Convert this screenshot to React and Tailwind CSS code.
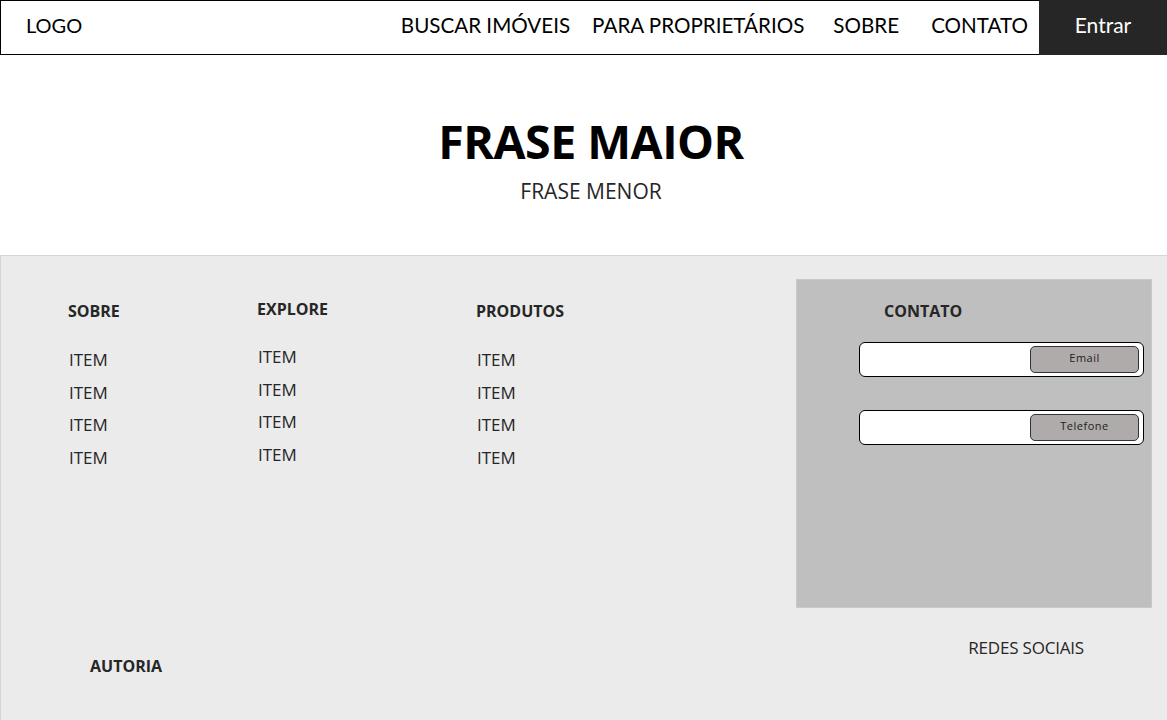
import React from 'react'

const columns = [
  { title: 'SOBRE', x: 'w-[189px]', head: 'mt-[2px]', items: 'mt-[25px]' },
  { title: 'EXPLORE', x: 'w-[219px]', head: 'mt-0', items: 'mt-[24px]' },
  { title: 'PRODUTOS', x: 'w-[200px]', head: 'mt-[2px]', items: 'mt-[25px]' },
]

function ContactField({ label }) {
  return (
    <div className="h-[35px] w-[285px] bg-white border border-black rounded-[6px] flex items-center justify-end pr-[4px]">
      <div className="h-[27px] w-[109px] bg-[#afabab] border border-[#333] rounded-[5px] flex items-center justify-center pb-[3px] text-[11px] text-[#222] tracking-[0.5px]">
        {label}
      </div>
    </div>
  )
}

export default function App() {
  return (
    <div className="w-[1167px] h-[720px] bg-white overflow-hidden" style={{ fontFamily: '"Open Sans", "Noto Sans", sans-serif' }}>
      {/* header */}
      <header className="flex h-[55px]" style={{ fontFamily: 'Lato, sans-serif' }}>
        <div className="flex-1 flex items-center border border-black border-r-0 pl-[25px] pb-[5px]">
          <span className="text-[20px] text-black">LOGO</span>
          <nav className="ml-auto flex items-center text-[20.6px] text-black">
            <span className="mr-[22px]">BUSCAR IMÓVEIS</span>
            <span className="mr-[29px]">PARA PROPRIETÁRIOS</span>
            <span className="mr-[32px]">SOBRE</span>
            <span className="mr-[11px]">CONTATO</span>
          </nav>
        </div>
        <button className="w-[128px] h-[55px] bg-[#262626] text-white text-[21px] pb-[5px]">Entrar</button>
      </header>

      {/* hero */}
      <section className="h-[200px] flex flex-col items-center pt-[63px] pl-[15px]">
        <h1 className="text-[46.5px] font-bold leading-none text-black tracking-[-0.5px]">FRASE MAIOR</h1>
        <p className="mt-[16px] text-[21px] leading-none text-[#262626]">FRASE MENOR</p>
      </section>

      {/* footer */}
      <footer className="h-[465px] bg-[#ebebeb] border-t border-l border-[#d6d6d6] flex flex-col">
        <div className="flex pt-[23px]">
          <div className="flex pl-[67px] pt-[18px]">
            {columns.map(col => (
              <div key={col.title} className={col.x}>
                <h3 className={`${col.head} text-[16px] font-bold text-[#262626] leading-[24px]`}>{col.title}</h3>
                <ul className={`${col.items} flex flex-col gap-[8.5px] pl-[1px]`}>
                  {[0, 1, 2, 3].map(i => (
                    <li key={i} className="text-[17px] text-[#262626] leading-[24px]">ITEM</li>
                  ))}
                </ul>
              </div>
            ))}
          </div>

          <div className="ml-auto mr-[15px] w-[356px] h-[329px] bg-[#bfbfbf] border border-[#c9c9c9] flex flex-col">
            <h3 className="ml-[87px] mt-[19px] text-[16px] font-bold text-[#262626] leading-[24px]">CONTATO</h3>
            <div className="ml-[62px] mt-[19px] flex flex-col gap-[33px]">
              <ContactField label="Email" />
              <ContactField label="Telefone" />
            </div>
          </div>
        </div>

        <div className="flex items-start mt-[28px]">
          <span className="ml-[89px] mt-[18px] text-[16px] font-bold text-[#262626] leading-[24px]">AUTORIA</span>
          <span className="ml-auto mr-[83px] text-[17px] text-[#262626] leading-[24px] tracking-[-0.2px]">REDES SOCIAIS</span>
        </div>
      </footer>
    </div>
  )
}
